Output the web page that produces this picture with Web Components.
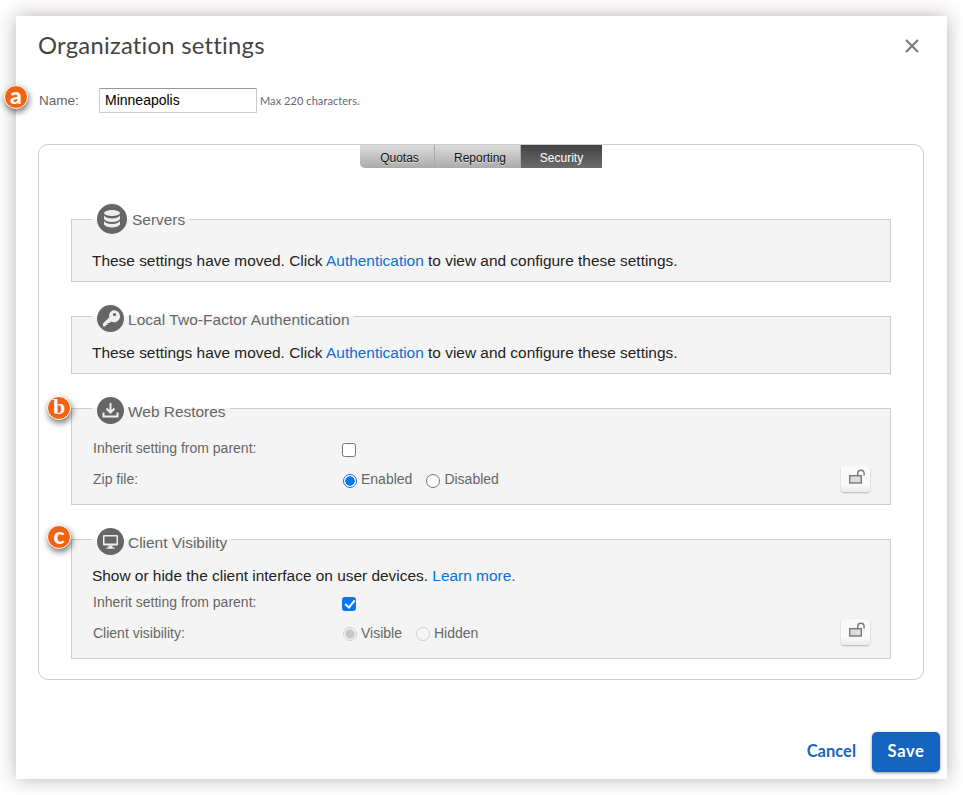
<!DOCTYPE html>
<html>
<head>
<meta charset="utf-8">
<title>Organization settings</title>
<style>
    html, body { margin: 0; background: #fff; }
    body { font-family: "Liberation Sans", Arial, sans-serif; }
    .link { color: #0b6fd6; text-decoration: none; }
</style>
</head>
<body>
<template id="org-dialog-template">
    <style>
        :host {
            display: flex;
            flex-direction: column;
            position: relative;
            box-sizing: border-box;
            width: 931px;
            height: 763px;
            margin: 16px 0 16px 16px;
            background: #fff;
            box-shadow: 0 0 18px rgba(70, 50, 50, .38);
        }
        header {
            display: flex;
            justify-content: space-between;
            align-items: center;
            height: 60px;
            padding: 0 28px 0 22px;
        }
        h1 {
            margin: -3px 0 0;
            font: 400 23.8px Lato, sans-serif;
            color: #444;
            letter-spacing: .25px;
        }
        .close { display: block; width: 14px; height: 14px; }
        main { flex: 1; padding: 0 23px 0 22px; }
        footer {
            display: flex;
            justify-content: flex-end;
            align-items: center;
            gap: 16px;
            padding: 0 7px 7px 0;
        }
        .cancel { margin-top: -2px; font: 700 16.5px Lato, sans-serif; color: #1565c0; }
        .save {
            display: flex;
            align-items: center;
            justify-content: center;
            width: 68px;
            height: 40px;
            padding-bottom: 2px;
            box-sizing: border-box;
            border-radius: 5px;
            background: #1565c0;
            color: #fff;
            font: 700 16.5px Lato, sans-serif;
            letter-spacing: .6px;
            box-shadow: 0 1px 3px rgba(0, 0, 0, .45);
        }
    </style>
    <header>
        <h1><slot name="title"></slot></h1>
        <svg class="close" viewBox="0 0 14 14"><path d="M1 1l12 12M13 1L1 13" stroke="#777" stroke-width="2" fill="none"/></svg>
    </header>
    <main><slot></slot></main>
    <footer>
        <span class="cancel">Cancel</span>
        <span class="save">Save</span>
    </footer>
    <slot name="overlay"></slot>
</template>

<template id="name-row-template">
    <style>
        :host {
            display: flex;
            align-items: center;
            height: 25px;
            margin: 12px 0 31px 1px;
            font-size: 13.5px;
            color: #666;
        }
        label { width: 60px; margin-top: -1px; }
        .field {
            box-sizing: border-box;
            width: 158px;
            height: 25px;
            padding: 0 5px;
            border: 1px solid #ccc;
            border-top-color: #999;
            font: 14px "Liberation Sans", Arial, sans-serif;
            line-height: 23px;
            color: #000;
        }
        small {
            margin-left: 3px;
            font: 11px Lato, sans-serif;
            letter-spacing: .07px;
            color: #667;
        }
    </style>
    <label>Name:</label>
    <div class="field"><slot></slot></div>
    <small><slot name="hint"></slot></small>
</template>

<template id="tab-panel-template">
    <style>
        :host {
            display: block;
            box-sizing: border-box;
            height: 536px;
            padding: 0 32px;
            border: 1px solid #ccc;
            border-radius: 10px;
        }
        .tabs {
            display: flex;
            width: 242px;
            height: 23px;
            margin: 0 auto 36px;
        }
        .tab {
            display: flex;
            align-items: center;
            justify-content: center;
            padding-top: 2px;
            box-sizing: border-box;
            border-right: 1px solid #aaa;
            background: linear-gradient(#dcdcdc, #ababab);
            font-size: 12px;
            color: #111;
            text-shadow: 0 1px 0 rgba(255, 255, 255, .6);
        }
        .tab:nth-child(1) { width: 75px; padding-left: 5px; border-radius: 0 0 0 5px; }
        .tab:nth-child(2) { width: 86px; padding-left: 5px; }
        .tab:nth-child(3) {
            width: 81px;
            border-right: 0;
            background: linear-gradient(#434343, #6b6b6b);
            color: #fff;
            text-shadow: none;
        }
        .stack { display: flex; flex-direction: column; gap: 23px; }
    </style>
    <div class="tabs">
        <div class="tab">Quotas</div>
        <div class="tab">Reporting</div>
        <div class="tab">Security</div>
    </div>
    <div class="stack"><slot></slot></div>
</template>

<template id="settings-group-template">
    <style>
        :host { display: block; }
        fieldset {
            margin: 0;
            min-width: 0;
            padding: var(--pad-top, 16px) 20px var(--pad-bottom, 10px) 20px;
            border: 1px solid #ccc;
            background: #f4f4f4;
        }
        legend {
            display: flex;
            align-items: flex-start;
            height: var(--legend-h, 22px);
            margin-left: 0;
            padding: 0 4px 0 5px;
            font-size: 15.45px;
            letter-spacing: var(--legend-spacing, 0);
            color: #666;
        }
        .icon {
            flex: none;
            display: block;
            width: var(--icon, 27px);
            height: var(--icon, 27px);
            margin-right: var(--icon-gap, 4px);
        }
        .text { line-height: var(--text-lh, 29px); }
    </style>
    <fieldset>
        <legend>
            <span class="icon"><slot name="icon"></slot></span>
            <span class="text"><slot name="title"></slot></span>
        </legend>
        <slot></slot>
    </fieldset>
</template>

<template id="moved-note-template">
    <style>
        :host {
            display: block;
            font-size: 15.43px;
            line-height: 20px;
            color: #222;
        }
    </style>
    <slot></slot>
</template>

<template id="setting-row-template">
    <style>
        :host {
            display: flex;
            align-items: center;
            height: 31px;
            padding-left: 1px;
            font-size: 14px;
            color: #666;
        }
        .label { width: 249px; margin-top: var(--label-shift, 0); }
        .value { display: flex; align-items: center; flex: 1; }
        .end { display: block; }
    </style>
    <div class="label"><slot name="label"></slot></div>
    <div class="value"><slot></slot></div>
    <slot name="end" class="end"></slot>
</template>

<template id="ui-check-template">
    <style>
        :host {
            display: block;
            position: relative;
            box-sizing: border-box;
            width: 14px;
            height: 14px;
            margin-top: 2px;
            border: 1px solid #767676;
            border-radius: 2.5px;
            background: #fff;
        }
        :host([checked]) { margin-top: 4px; border-color: #0a75f0; background: #0a75f0; }
        :host([checked])::after {
            content: "";
            position: absolute;
            left: 3.5px;
            top: 0.5px;
            width: 4px;
            height: 8px;
            border: solid #fff;
            border-width: 0 2px 2px 0;
            transform: rotate(40deg);
        }
    </style>
</template>

<template id="ui-radio-template">
    <style>
        :host {
            display: flex;
            align-items: center;
            margin-right: 13px;
            font-size: 14px;
            color: #666;
        }
        .dot {
            flex: none;
            box-sizing: border-box;
            width: 14px;
            height: 14px;
            margin: 2px 4px 0 1px;
            border: 1px solid #767676;
            border-radius: 50%;
            background: #fff;
        }
        :host([checked]) .dot {
            border-color: #0a75f0;
            background: radial-gradient(circle, #0a75f0 0 4.4px, #fff 5px);
        }
        :host([disabled]) .dot { border-color: #cfcfcf; background-color: #f6f6f6; }
        :host([disabled][checked]) .dot {
            background: radial-gradient(circle, #c8c8c8 0 4.4px, #f6f6f6 5px);
        }
        .text { margin-top: -2px; }
        :host([disabled]) .text { margin-top: 0; }
    </style>
    <span class="dot"></span>
    <span class="text"><slot></slot></span>
</template>

<template id="lock-button-template">
    <style>
        :host {
            display: block;
            box-sizing: border-box;
            width: 29px;
            height: 26px;
            margin-top: -2px;
            border-radius: 3px;
            background: linear-gradient(#fafafa 70%, #eaeaea);
            box-shadow: 0 1px 2px rgba(0, 0, 0, .28);
        }
        svg { display: block; width: 29px; height: 26px; }
    </style>
    <svg viewBox="0 0 29 26">
        <rect x="8.700" y="9.700" width="11.600" height="7.300" fill="#ddd" stroke="#777" stroke-width="1.400"/>
        <path d="M16.700 9.700V7.500a3.200 3.200 0 0 1 6.400 0V9.500" fill="none" stroke="#777" stroke-width="1.400"/>
    </svg>
</template>

<template id="call-out-template">
    <style>
        :host {
            position: absolute;
            display: flex;
            align-items: center;
            justify-content: center;
            box-sizing: border-box;
            width: 24px;
            height: 24px;
            border: 1.5px solid #fff;
            border-radius: 50%;
            background: #f4620f;
            color: #fff;
            font: 900 23px/1 Lato, sans-serif;
            box-shadow: 1px 3px 6px rgba(0, 0, 0, .55);
        }
        :host(.serif) { font: 700 22px/1 "Liberation Serif", serif; }
        span { margin-top: -3px; }
    </style>
    <span><slot></slot></span>
</template>

<org-dialog>
    <span slot="title">Organization settings</span>
    <name-row>Minneapolis<span slot="hint">Max 220 characters.</span></name-row>
    <tab-panel>
        <settings-group style="--legend-h:30px;--icon:30px;--icon-gap:5px;--text-lh:32px;--pad-top:17px">
            <svg slot="icon" viewBox="0 0 30 30" width="30" height="30">
                <circle cx="15" cy="15" r="15" fill="#666"/>
                <ellipse cx="15" cy="9" rx="8" ry="3" fill="#eee"/>
                <path d="M7 11.500c1 2 4.500 3 8 3s7-1 8-3V15c-1 2-4.500 3-8 3s-7-1-8-3zM7 17c1 2 4.500 3 8 3s7-1 8-3v3.500c-1 2-4.500 3-8 3s-7-1-8-3z" fill="#eee"/>
            </svg>
            <span slot="title">Servers</span>
            <moved-note>These settings have moved. Click <span class="link">Authentication</span> to view and configure these settings.</moved-note>
        </settings-group>
        <settings-group style="--legend-spacing:.07px">
            <svg slot="icon" viewBox="0 0 27 27" width="27" height="27">
                <circle cx="13.500" cy="13.500" r="13.500" fill="#666"/>
                <path d="M15.500 5.500a6 6 0 1 1-1.500 11l-1.500 1.500h-2v2h-2v1.500H6v-3l6.300-6.300a6 6 0 0 1 3.200-6.700z" fill="#eee"/>
                <circle cx="17.500" cy="9.500" r="1.600" fill="#666"/>
            </svg>
            <span slot="title">Local Two-Factor Authentication</span>
            <moved-note>These settings have moved. Click <span class="link">Authentication</span> to view and configure these settings.</moved-note>
        </settings-group>
        <settings-group style="--pad-top:14px;--pad-bottom:9px;--label-shift:-2px">
            <svg slot="icon" viewBox="0 0 27 27" width="27" height="27">
                <circle cx="13.500" cy="13.500" r="13.500" fill="#666"/>
                <path d="M13.500 6v9.500M9.500 11.500l4 4 4-4" fill="none" stroke="#eee" stroke-width="2"/>
                <path d="M6.500 15.500v4h14v-4" fill="none" stroke="#eee" stroke-width="2"/>
            </svg>
            <span slot="title">Web Restores</span>
            <setting-row><span slot="label">Inherit setting from parent:</span><ui-check></ui-check></setting-row>
            <setting-row>
                <span slot="label">Zip file:</span>
                <ui-radio checked>Enabled</ui-radio>
                <ui-radio>Disabled</ui-radio>
                <lock-button slot="end"></lock-button>
            </setting-row>
        </settings-group>
        <settings-group style="--pad-bottom:10px">
            <svg slot="icon" viewBox="0 0 27 27" width="27" height="27">
                <circle cx="13.500" cy="13.500" r="13.500" fill="#666"/>
                <rect x="6" y="7" width="15" height="10.500" rx="1" fill="#eee"/>
                <rect x="7.500" y="8.500" width="12" height="7" fill="#666"/>
                <path d="M11.500 17.500h4v2h2v1.200h-8v-1.200h2z" fill="#eee"/>
            </svg>
            <span slot="title">Client Visibility</span>
            <moved-note>Show or hide the client interface on user devices. <span class="link">Learn more.</span></moved-note>
            <setting-row><span slot="label">Inherit setting from parent:</span><ui-check checked></ui-check></setting-row>
            <setting-row>
                <span slot="label">Client visibility:</span>
                <ui-radio checked disabled>Visible</ui-radio>
                <ui-radio disabled>Hidden</ui-radio>
                <lock-button slot="end"></lock-button>
            </setting-row>
        </settings-group>
    </tab-panel>
    <call-out slot="overlay" style="left:-12px;top:69px">a</call-out>
    <call-out slot="overlay" class="serif" style="left:31px;top:380px">b</call-out>
    <call-out slot="overlay" style="left:31px;top:509px">c</call-out>
</org-dialog>

<script>
    // every element here is just its template in an open shadow root
    ['org-dialog', 'name-row', 'tab-panel', 'settings-group', 'moved-note',
     'setting-row', 'ui-check', 'ui-radio', 'lock-button', 'call-out'].forEach((tag) => {
        customElements.define(tag, class extends HTMLElement {
            constructor() {
                super();
                const template = document.querySelector(`#${tag}-template`);
                const shadowRoot = this.attachShadow({ mode: 'open' });
                shadowRoot.appendChild(document.importNode(template.content, true));
            }
        });
    });
</script>
</body>
</html>
